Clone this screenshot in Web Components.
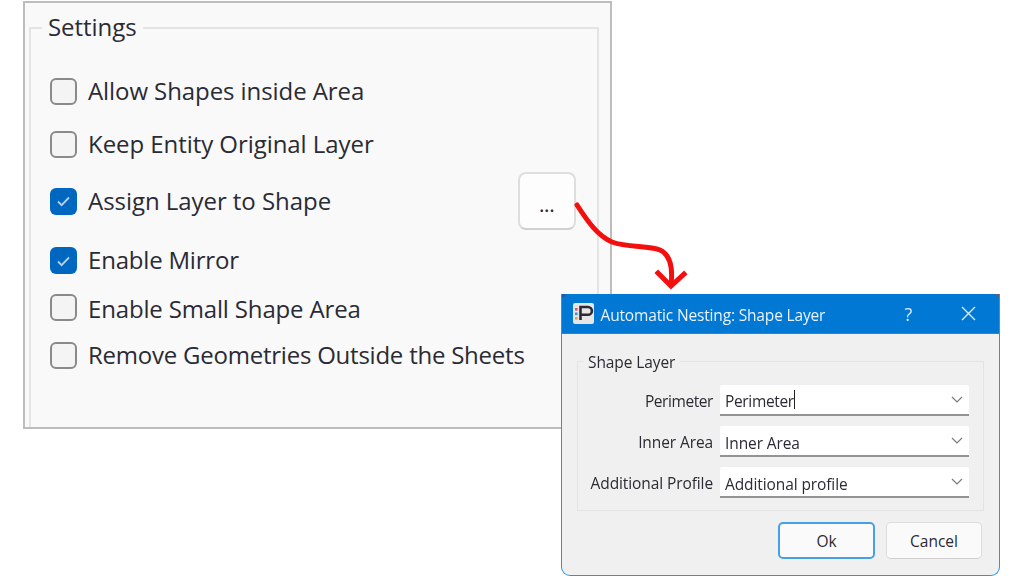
<!DOCTYPE html>
<html><head><meta charset="utf-8"><style>
html,body{margin:0;padding:0;background:#fff}
body{width:1024px;height:576px;overflow:hidden;position:relative;font-family:"Open Sans","Noto Sans",sans-serif;color:#2b2b33}
</style></head><body>
<nest-stage>
  <settings-panel slot="panel">
    <check-row style="--m:0px;--ls:-.08px;" label="Allow Shapes inside Area"></check-row>
    <check-row style="--m:23px;--ls:-.06px;" label="Keep Entity Original Layer"></check-row>
    <check-row style="--m:27px;--ls:-.05px;" label="Assign Layer to Shape" checked><tool-btn></tool-btn></check-row>
    <check-row style="--m:29.5px;--ls:-.2px;--dy:-1px" label="Enable Mirror" checked></check-row>
    <check-row style="--m:16.5px;--ls:-.16px;--dy:2px" label="Enable Small Shape Area"></check-row>
    <check-row style="--m:18px;--ls:-.23px;" label="Remove Geometries Outside the Sheets"></check-row>
  </settings-panel>
  <red-arrow slot="arrow"></red-arrow>
  <shape-dialog slot="dialog">
    <form-row style="--lls:-.42px;--vls:-.35px;--vy:1px" label="Perimeter" value="Perimeter" caret></form-row>
    <form-row style="--lls:-.1px;--vls:-.1px;--vy:2px" label="Inner Area" value="Inner Area"></form-row>
    <form-row style="--lls:-.1px;--vls:-.1px;--vy:2px" label="Additional Profile" value="Additional profile"></form-row>
  </shape-dialog>
</nest-stage>
<script>
function def(name, html, init){
  customElements.define(name, class extends HTMLElement{
    constructor(){super();const r=this.attachShadow({mode:'open'});
      r.innerHTML=typeof html==='function'?html(this):html;}
    connectedCallback(){if(init)init(this);}
  });
}
def('nest-stage',`<style>:host{display:block;position:absolute;inset:0;filter:blur(.4px)}
::slotted([slot=panel]){position:absolute;left:23px;top:1px}
::slotted([slot=arrow]){position:absolute;left:570px;top:198px}
::slotted([slot=dialog]){position:absolute;left:561px;top:294px}
</style><slot name="panel"></slot><slot name="arrow"></slot><slot name="dialog"></slot>`);

def('settings-panel',`<style>
:host{display:block;width:589px;height:428px;box-sizing:border-box;background:#f9f9f9;border:2px solid #bdbdbd;padding:24px 11px 0 4px;font-size:24px}
.group{position:relative;height:400px;box-sizing:border-box;border:2px solid #e4e4e4;border-bottom:0;padding:47px 0 0 19px;display:flex;flex-direction:column}
.legend{position:absolute;left:11px;top:-16px;padding:0 6px;background:#f9f9f9;font-size:24px;line-height:28px;letter-spacing:-.05px;color:#2b2b33}
</style><div class="group"><div class="legend">Settings</div><slot></slot></div>`);

def('check-row',el=>{
 const c=el.hasAttribute('checked');
 return `<style>
:host{display:flex;align-items:center;height:30px;margin-top:var(--m,0);position:relative}
.box{width:27px;height:27px;box-sizing:border-box;border-radius:6px;flex:none;display:flex;align-items:center;justify-content:center;
 ${c?'background:#0067c0;border:0':'background:#f4f4f4;border:2px solid #8a8a8a'}}
.t{margin-left:11px;font-size:24px;line-height:30px;letter-spacing:var(--ls,0);white-space:nowrap;color:#2b2b33;position:relative;top:var(--dy,0)}
svg{display:block}
</style><span class="box">${c?'<svg width="15" height="12" viewBox="0 0 15 12"><path d="M2 6.5l3.6 3.6L13 2.5" fill="none" stroke="#b7d0ec" stroke-width="1.8"/></svg>':''}</span><span class="t">${el.getAttribute('label')}</span><slot></slot>`});

def('tool-btn',`<style>:host{position:absolute;left:468px;top:-14.5px;width:58px;height:58px;box-sizing:border-box;background:#fdfdfd;border:2px solid #dedede;border-bottom-color:#d0d0d0;border-radius:8px;display:flex;align-items:center;justify-content:center;color:#2b2b33;font-size:18px;line-height:18px;font-weight:600}
span{position:relative;top:4px;letter-spacing:.3px}</style><span>...</span>`);

def('red-arrow',`<style>:host{display:block;width:125px;height:95px}svg{display:block;overflow:visible}</style>
<svg width="125" height="95" viewBox="570 198 125 95"><path d="M577 205C588 222 598 236 612 242C628 248 648 245 660 250C671 255 673 268 671 285" fill="none" stroke="#f40f0f" stroke-width="5" stroke-linecap="round"/><path d="M658 273L671 286L684 274" fill="none" stroke="#f40f0f" stroke-width="5" stroke-linecap="square"/></svg>`);

def('shape-dialog',`<style>
:host{display:flex;flex-direction:column;width:439px;height:282px;box-sizing:border-box;background:#f0f0f0;border:1.5px solid #2f94e0;border-top:0;border-radius:0 0 9px 9px;overflow:hidden;font-size:15px}
.bar{height:40px;background:#0078d4;color:#fff;display:flex;align-items:center;flex:none;margin:0 -1.5px;border-bottom:1px solid #1e88dc;box-sizing:border-box;position:relative}
.cl,.cr{position:absolute;top:0;width:6px;height:6px}
.cl{left:0;background:linear-gradient(135deg,#1a5fa5 50%,transparent 50%)}
.cr{right:0;background:linear-gradient(225deg,#55627a 50%,transparent 50%)}
.ico{margin-left:12px;margin-right:7px;display:block}
.title{font-size:15.5px;letter-spacing:-.16px;color:#eaf3fb;white-space:nowrap;line-height:20px;position:relative;top:1px}
.help{margin-left:auto;width:20px;text-align:center;font-size:18px;color:#dcebf8;position:relative;left:-1px}
.x{margin:0 25px 0 41px;display:block}
.main{flex:1;padding:27px 15px 0 15px;display:flex;flex-direction:column}
.group{position:relative;height:150px;box-sizing:border-box;border:1px solid #e3e3e3;padding:23px 13px 0 0;display:flex;flex-direction:column;gap:10px}
.legend{position:absolute;left:5px;top:-10px;padding:0 5px;background:#f0f0f0;font-size:15.5px;line-height:20px;letter-spacing:-.1px;color:#2b2b33}
.btns{display:flex;justify-content:flex-end;gap:11px;margin-top:11px;padding-right:2px}
.b{height:37px;box-sizing:border-box;border-radius:5px;background:#fafafa;display:flex;align-items:center;justify-content:center;font-size:15.5px;color:#2b2b33}
.ok{width:97px;border:2px solid #47a0e6}
.cancel{width:96px;border:1px solid #dcdcdc;border-bottom-color:#cfcfcf}
</style>
<div class="bar"><i class="cl"></i><i class="cr"></i>
<svg class="ico" width="21" height="21" viewBox="0 0 21 21"><rect width="21" height="21" rx="2" fill="#e6e6e6"/><path d="M7.5 17V4H15a3.8 3.8 0 0 1 0 7.8H7.5" fill="none" stroke="#2a2a30" stroke-width="2.6"/><rect x="2" y="5" width="2.6" height="2.6" fill="#e2574c"/><rect x="2" y="9.5" width="2.6" height="2.6" fill="#3f8fe0"/><rect x="2" y="14" width="2.6" height="2.6" fill="#e9a23b"/></svg>
<span class="title">Automatic Nesting: Shape Layer</span>
<span class="help">?</span>
<svg class="x" width="15" height="15" viewBox="0 0 15 15"><path d="M1 1l13 13M14 1L1 14" stroke="#dcebf8" stroke-width="1.4" fill="none"/></svg>
</div>
<div class="main">
<div class="group"><div class="legend">Shape Layer</div><slot></slot></div>
<div class="btns"><div class="b ok">Ok</div><div class="b cancel">Cancel</div></div>
</div>`);

def('form-row',el=>`<style>
:host{display:flex;align-items:center;height:31px;font-size:15.5px}
.l{width:135px;text-align:right;letter-spacing:var(--lls);white-space:nowrap;color:#2b2b33;flex:none;margin-right:7px}
.f{width:249px;height:31px;box-sizing:border-box;background:#fff;border-bottom:2px solid #939393;border-radius:2px 2px 0 0;display:flex;align-items:center;padding:0 5px 0 5px;color:#2b2b33;letter-spacing:var(--vls)}
.v{position:relative;top:var(--vy);white-space:nowrap}
.c{width:1px;height:19px;background:#222;margin-left:0}
svg{margin-left:auto;margin-right:1px;display:block}
</style><span class="l">${el.getAttribute('label')}</span><span class="f"><span class="v">${el.getAttribute('value')}</span>${el.hasAttribute('caret')?'<span class="c"></span>':''}<svg width="12" height="8" viewBox="0 0 12 8"><path d="M1 1l5 5 5-5" fill="none" stroke="#7a7a7a" stroke-width="1.2"/></svg></span>`);
</script>
</body></html>
